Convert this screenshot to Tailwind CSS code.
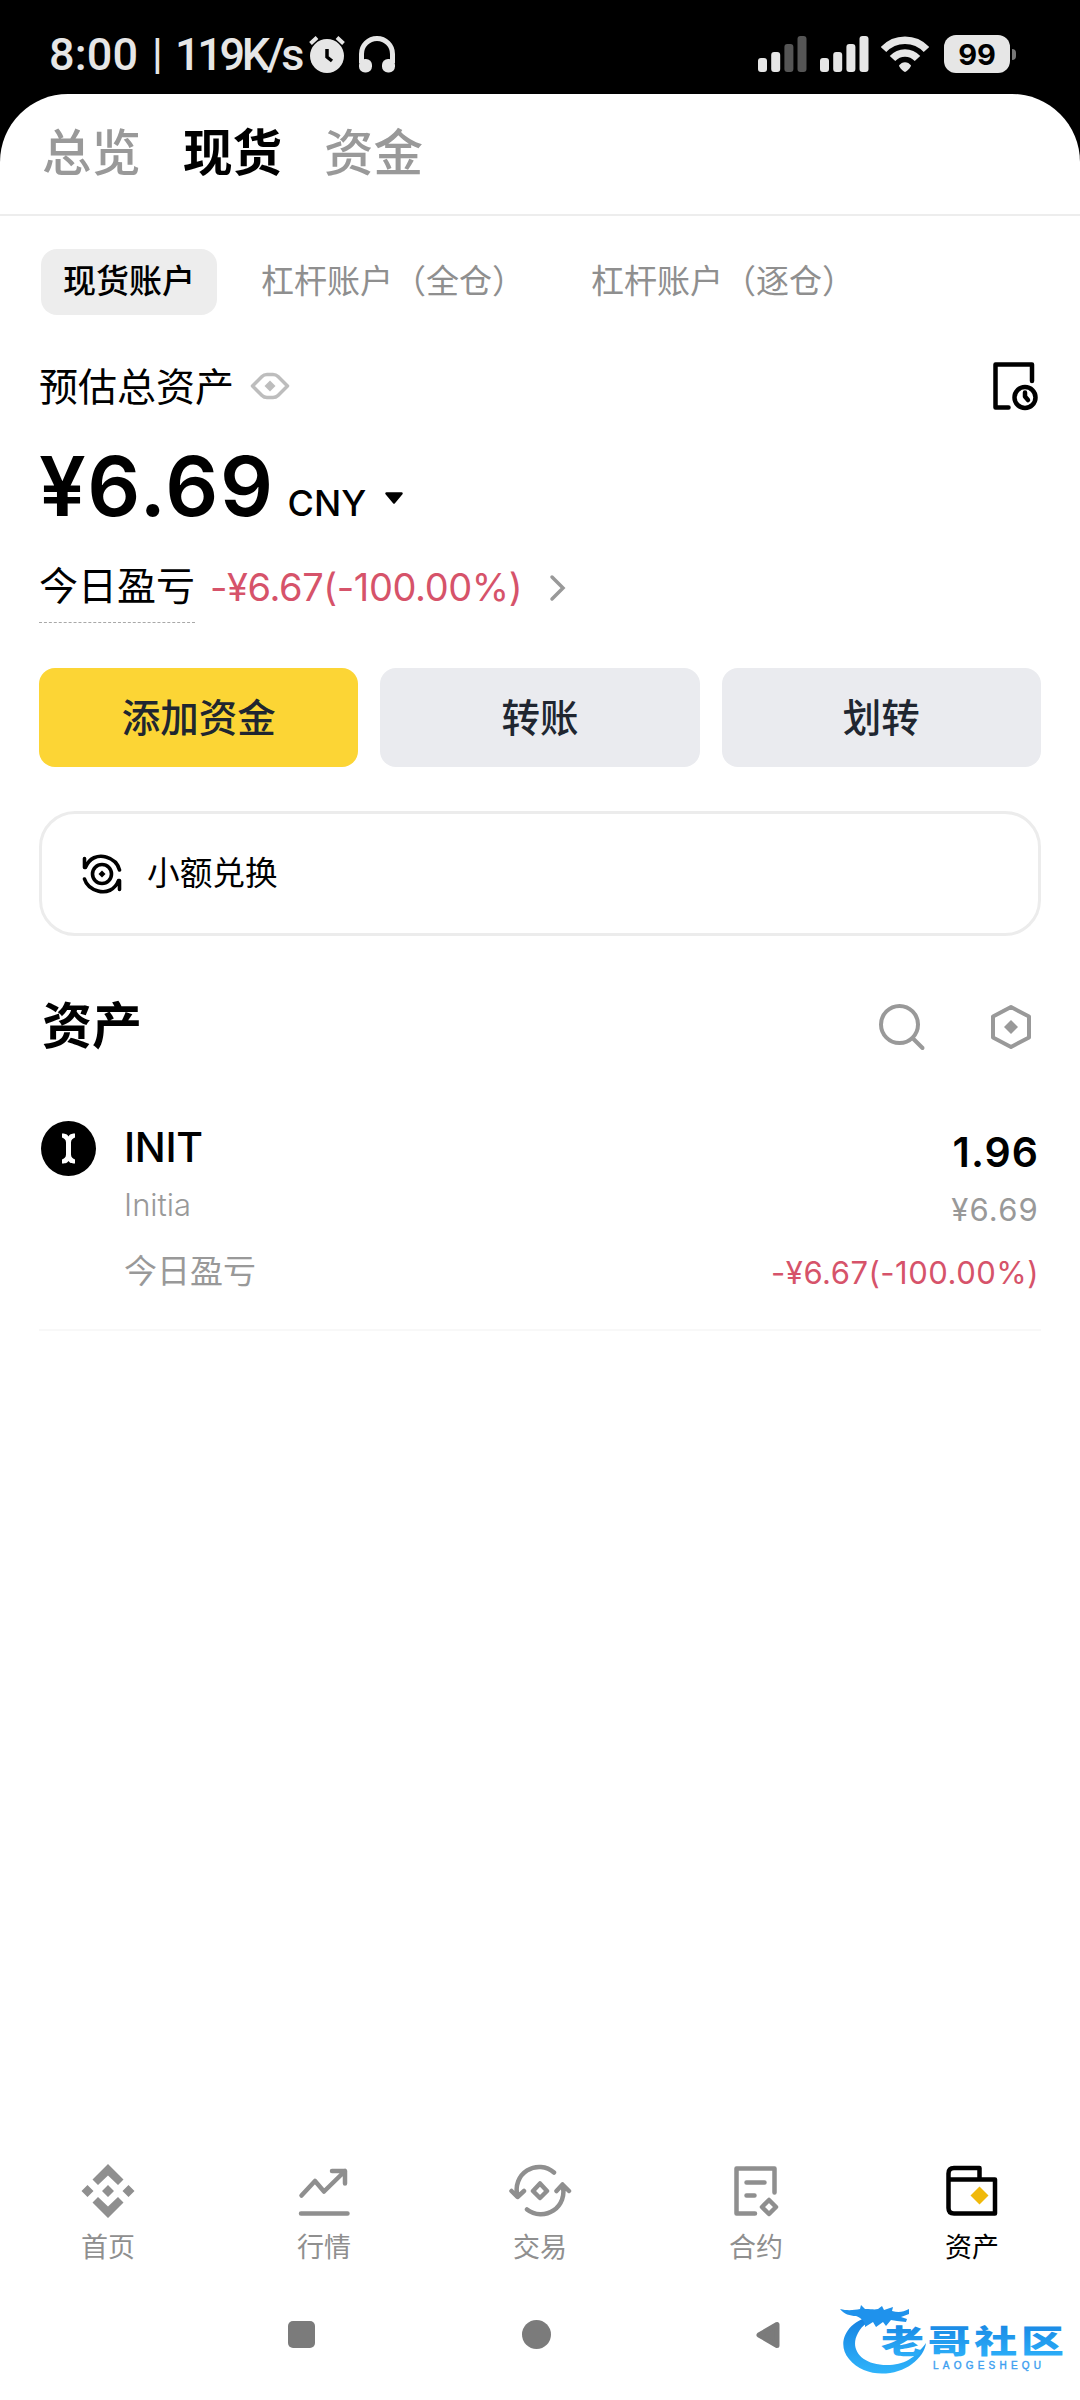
<!DOCTYPE html>
<html lang="zh-CN">
<head>
<meta charset="utf-8">
<title>资产</title>
<script src="https://cdn.jsdelivr.net/npm/@tailwindcss/browser@4"></script>
</head>
<body class="bg-black">
<div class="flex h-[2400px] w-[1080px] flex-col overflow-hidden bg-black font-['Inter','Noto_Sans_CJK_SC',sans-serif] leading-none whitespace-nowrap text-black">

  <!-- status bar -->
  <div class="flex h-[94px] shrink-0 items-center justify-between pt-[14px] pr-[64px] pl-[49px] text-[#e6e6e6]">
    <div class="flex items-center">
      <div class="flex w-[259px] items-center font-['Roboto',sans-serif] text-[45px] font-medium">
        <span class="w-[103px] tracking-[0.200px]">8:00</span>
        <span class="w-[23px] pb-[2px] text-[43px]">|</span>
        <span class="tracking-[-3.300px]">119K/s</span>
      </div>
      <svg class="h-[38px] w-[38px]" viewBox="0 0 38 38"><path d="M2.500 8.500 9 2.500M35.500 8.500 29 2.500" stroke="#e6e6e6" stroke-width="4"/><circle cx="19" cy="21" r="17" fill="#e6e6e6"/><path d="M19 14v8l5 4" fill="none" stroke="#000" stroke-width="3.500"/></svg>
      <svg class="ml-[12px] h-[38px] w-[38px]" viewBox="0 0 38 38"><path d="M3.500 28V19a15.500 15.500 0 0 1 31 0v9" fill="none" stroke="#e6e6e6" stroke-width="5"/><rect x="1" y="24" width="13" height="13.500" rx="6" fill="#e6e6e6"/><rect x="24" y="24" width="13" height="13.500" rx="6" fill="#e6e6e6"/></svg>
    </div>
    <div class="flex items-center">
      <svg class="h-[36px] w-[49px]" viewBox="0 0 49 36" fill="#e6e6e6"><rect y="22" width="9" height="14" rx="3"/><rect x="13.200" y="16" width="9" height="20" rx="3"/><rect x="26.400" y="8" width="9" height="28" rx="3" fill="#555"/><rect x="39.500" width="9" height="36" rx="3" fill="#555"/></svg>
      <svg class="ml-[13px] h-[36px] w-[49px]" viewBox="0 0 49 36" fill="#e6e6e6"><rect y="22" width="9" height="14" rx="3"/><rect x="13.200" y="16" width="9" height="20" rx="3"/><rect x="26.400" y="8" width="9" height="28" rx="3"/><rect x="39.500" width="9" height="36" rx="3"/></svg>
      <svg class="ml-[12px] h-[36px] w-[48px]" viewBox="0 0 48 36" fill="none" stroke="#e6e6e6" stroke-width="7.500"><path d="M2.500 13.500C14 1 34 1 45.500 13.500"/><path d="M11.500 22.500c7-7.500 18-7.500 25 0"/><path d="M18 29.500c3-4.500 9-4.500 12 0 0 2-5 6.500-6 6.500s-6-4.500-6-6.500z" fill="#e6e6e6" stroke="none"/></svg>
      <div class="ml-[15px] flex h-[38px] w-[66px] items-center justify-center rounded-[12px] bg-[#e6e6e6] text-[29px] font-bold text-black">99</div>
      <div class="ml-[2px] h-[11px] w-[4px] rounded-r-full bg-[#777]"></div>
    </div>
  </div>

  <div class="flex grow flex-col rounded-t-[68px] bg-white font-['Noto_Sans','Noto_Sans_CJK_SC',sans-serif]">
    <!-- top tabs -->
    <div class="flex h-[122px] shrink-0 items-center gap-[42px] border-b-2 border-[#ededed] pb-[2px] pl-[42px] text-[49.5px] font-medium text-[#999]">
      <span>总览</span><span class="font-bold text-black">现货</span><span>资金</span>
    </div>

    <!-- account chips -->
    <div class="mt-[33px] flex gap-[22px] pl-[41px] text-[33px] text-[#8f8f8f]">
      <div class="flex h-[66px] items-center rounded-[16px] bg-[#ededed] px-[22px] pb-[3px] font-medium text-black">现货账户</div>
      <div class="flex h-[66px] items-center px-[22px] pb-[3px]">杠杆账户（全仓）</div>
      <div class="flex h-[66px] items-center px-[22px] pb-[3px]">杠杆账户（逐仓）</div>
    </div>

    <div class="flex grow flex-col px-[39px]">
      <!-- balance -->
      <div class="mt-[47px] flex h-[48px] items-center justify-between">
        <div class="flex items-center gap-[16px]">
          <span class="pb-[2px] text-[39px]">预估总资产</span>
          <svg class="h-[28px] w-[40px]" viewBox="0 0 40 28"><path d="M2.500 14 12 4.500Q14 2.500 17 2.500h6q3 0 5 2L37.500 14 28 23.500q-2 2-5 2h-6q-3 0-5-2z" fill="none" stroke="#bdbdbd" stroke-width="3.500" stroke-linejoin="round"/><path d="m20 8.500 5.500 5.500-5.500 5.500-5.500-5.500z" fill="#bdbdbd"/></svg>
        </div>
        <svg class="mr-[1px] h-[50px] w-[48px]" viewBox="0 0 48 50" fill="none" stroke="#000" stroke-width="4.500" stroke-linecap="round" stroke-linejoin="round"><path d="M16.500 46.500H3.500V3.500H40V20"/><circle cx="33" cy="36.500" r="10.500"/><path d="M33 31.500v4l3 3.500"/></svg>
      </div>
      <div class="mt-[35px] flex h-[96px] items-baseline font-['Inter',sans-serif]">
        <span class="text-[83px] font-semibold tracking-[1.600px]">¥6.69</span>
        <span class="ml-[13px] text-[36px] font-medium">CNY</span>
        <svg class="ml-[18px] h-[24px] w-[20px]" viewBox="0 0 20 24"><path d="M2.500 1.500h15L10 10.500z" stroke="#000" stroke-width="2.500" stroke-linejoin="round"/></svg>
      </div>
      <div class="mt-[14px] flex h-[60px] items-center text-[39px]">
        <span class="flex h-[76px] items-center border-b border-dashed border-[#a8a8a8]">今日盈亏</span>
        <span class="ml-[15px] w-[313px] pt-[3px] font-['Inter',sans-serif] text-[38px] tracking-[-0.400px] text-[#d6536a]">-¥6.67(-100.00%)</span>
        <svg class="mt-[6px] ml-[26px] h-[28px] w-[18px]" viewBox="0 0 18 28"><path d="M3 3l11 11L3 25" fill="none" stroke="#999" stroke-width="3.500" stroke-linecap="round"/></svg>
      </div>

      <!-- actions -->
      <div class="mt-[53px] grid grid-cols-3 gap-[22px] text-[38.500px] font-medium text-[#202630]">
        <div class="flex h-[99px] items-center justify-center rounded-[16px] bg-[#fcd535]">添加资金</div>
        <div class="flex h-[99px] items-center justify-center rounded-[16px] bg-[#eaebef]">转账</div>
        <div class="flex h-[99px] items-center justify-center rounded-[16px] bg-[#eaebef]">划转</div>
      </div>

      <div class="mt-[44px] flex h-[125px] items-center rounded-[36px] border-[3px] border-[#ececec] pl-[40px] text-[32.700px]">
        <svg class="h-[40px] w-[40px]" viewBox="0 0 40 40" fill="none" stroke="#000" stroke-width="3.600" stroke-linecap="round" stroke-linejoin="round"><circle cx="20" cy="20" r="9.500"/><path d="m20 16.500 3.500 3.500-3.500 3.500-3.500-3.500z" fill="#000" stroke="none"/><path d="M2.500 4.500v9h1C7 4 16 .5 24 3c7 2 12 7 13.500 13"/><path d="M37.500 35.500v-9h-1C33 36 24 39.500 16 37 9 35 4 30 2.500 25"/></svg>
        <span class="ml-[25px]">小额兑换</span>
      </div>

      <!-- asset list -->
      <div class="mt-[61px] flex h-[60px] items-center justify-between pr-[8px] pl-[3px]">
        <h2 class="pb-[5px] text-[50px] font-bold">资产</h2>
        <div class="flex items-center gap-[63px]">
          <svg class="h-[48px] w-[48px]" viewBox="0 0 48 48" fill="none" stroke="#999" stroke-width="4" stroke-linecap="round"><circle cx="21.500" cy="21.500" r="18.500"/><path d="M35 35.500l9.500 9.500"/></svg>
          <svg class="h-[48px] w-[44px]" viewBox="0 0 44 48"><path d="M22 4 40 13.500v21L22 44 4 34.500v-21z" fill="none" stroke="#999" stroke-width="4" stroke-linejoin="round"/><path d="m22 17 7 7-7 7-7-7z" fill="#999"/></svg>
        </div>
      </div>

      <div class="mt-[64px] flex h-[210px] border-b-2 border-[#f8f8f8] pr-[2px] pl-[2px]">
        <svg class="h-[55px] w-[55px]" viewBox="0 0 55 55"><circle cx="27.500" cy="27.500" r="27.500"/><path d="M21 12.500c2 0 5 0 6.500 3 1.500-3 4.500-3 6.500-3v4c-2 1-4 2-4 5v12c0 3 2 4 4 5v4c-2 0-5 0-6.500-2.500-1.500 2.500-4.500 2.500-6.500 2.500v-4c2-1 4-2 4-5v-12c0-3-2-4-4-5z" fill="#fff"/></svg>
        <div class="ml-[28px] flex flex-col text-[#999]">
          <span class="mt-[6px] font-['Inter',sans-serif] text-[41px] font-medium tracking-[-0.400px] text-black">INIT</span>
          <span class="mt-[21px] font-['Inter',sans-serif] text-[31px] font-light">Initia</span>
          <span class="mt-[34px] text-[33px]">今日盈亏</span>
        </div>
        <div class="ml-auto flex flex-col items-end font-['Inter',sans-serif] text-[#999]">
          <span class="mt-[11px] text-[41px] font-semibold tracking-[1px] text-black">1.96</span>
          <span class="mt-[21px] text-[31px] tracking-[1.200px]">¥6.69</span>
          <span class="mt-[32px] text-[31px] tracking-[0.500px] text-[#d6536a]">-¥6.67(-100.00%)</span>
        </div>
      </div>
    </div>

    <!-- tab bar -->
    <div class="grid h-[146px] shrink-0 grid-cols-5 text-[27px] text-[#8f8f8f]">
      <div class="flex flex-col items-center gap-[13px]">
        <svg class="h-[58px] w-[58px]" viewBox="0 0 58 58" fill="#8f8f8f"><path d="M29 2 44.500 17.500 39 23 29 13.500 19 23l-5.500-5.500zM29 56 44.500 40.500 39 35 29 44.500 19 35l-5.500 5.500zM29 23l6 6-6 6-6-6zM8.500 23l6 6-6 6-6-6zM49.500 23l6 6-6 6-6-6z"/></svg>
        <span>首页</span>
      </div>
      <div class="flex flex-col items-center gap-[13px]">
        <svg class="h-[58px] w-[58px]" viewBox="0 0 58 58" fill="none" stroke="#8f8f8f" stroke-width="4.500" stroke-linecap="round" stroke-linejoin="round"><path d="M6.500 33.500 20 19l9 10.500L50 9M37 9h13v12.500M6 51.500h46.500"/></svg>
        <span>行情</span>
      </div>
      <div class="flex flex-col items-center gap-[13px]">
        <svg class="h-[58px] w-[64px]" viewBox="0 0 64 58" fill="none" stroke="#8f8f8f" stroke-width="4.500" stroke-linecap="round" stroke-linejoin="round"><path d="M46 10.500A22.500 22.500 0 0 0 9.500 33.500M3.500 29l6 6 6.500-6M19 47.500A22.500 22.500 0 0 0 54.500 23.500M48.500 29l6-6.500 6.500 6.500M32 21.500l7 7.500-7 7-7-7z"/></svg>
        <span>交易</span>
      </div>
      <div class="flex flex-col items-center gap-[13px]">
        <svg class="h-[58px] w-[58px]" viewBox="0 0 58 58" fill="none" stroke="#8f8f8f" stroke-width="4.500" stroke-linecap="round" stroke-linejoin="round"><path d="M28 51.500H9.500v-45h38v24M19.500 20.500h18M19.500 33.500h8M42 38l7 7-7 7-7-7z"/></svg>
        <span>合约</span>
      </div>
      <div class="flex flex-col items-center gap-[13px] text-black">
        <svg class="h-[58px] w-[58px]" viewBox="0 0 58 58" fill="none" stroke="#000" stroke-width="4.500" stroke-linecap="round" stroke-linejoin="round"><path d="M36.500 17V6H11q-5.500 0-5.500 5.500V46q0 5.500 5.500 5.500h41v-34H6"/><path d="m36.500 24.500 9 9-9 9-9-9z" fill="#f0b90b" stroke="none"/></svg>
        <span>资产</span>
      </div>
    </div>

    <!-- system navigation -->
    <div class="flex h-[92px] shrink-0 items-start pt-[12px]">
      <div class="mt-[1px] ml-[288px] h-[27px] w-[27px] rounded-[5px] bg-[#7b7b7b]"></div>
      <div class="ml-[207px] h-[29px] w-[29px] rounded-full bg-[#7b7b7b]"></div>
      <svg class="mt-[1px] ml-[204px] h-[28px] w-[25px]" viewBox="0 0 25 28"><path d="M4 14 22 3.500v21z" fill="#7b7b7b" stroke="#7b7b7b" stroke-width="5" stroke-linejoin="round"/></svg>
      <svg class="-mt-[19px] ml-[57px] h-[84px] w-[232px]" viewBox="0 0 232 84">
        <defs><linearGradient id="b" x1="0" y1="0" x2="0" y2="1"><stop offset="0" stop-color="#1580e0"/><stop offset="1" stop-color="#2fb4fb"/></linearGradient></defs>
        <path d="M37 15C11 18-2 42 12 58c15 19 46 18 63 5 8-6 13-13 14-21-12 16-22 22-39 22-26 0-38-16-29-32 4-8 12-13 22-15z" fill="url(#b)"/>
        <path d="M3 8c8 2 14 1 20 0l1-4 4 4c7 0 9 1 13 0l4-3 2 4 9-3-1 4c7 2 11 1 17-2v5l-8 3 6 2-1 3-9-1-6-1-5 6-3-4-7 5-3-5-8 5c1-5-4-9-9-11-6 0-12-2-16-7z" fill="#1f92ec"/>
        <g transform="translate(44 52) scale(1.34 1)"><text font-family="Noto Sans CJK SC, sans-serif" font-weight="900" font-size="32" letter-spacing="2.800" fill="url(#b)">老哥社区</text></g>
        <text x="96" y="68" font-family="Liberation Sans, sans-serif" font-size="10" textLength="108" fill="#3d9ff0" stroke="#3d9ff0" stroke-width=".4">LAOGESHEQU</text>
      </svg>
    </div>
  </div>
</div>
</body>
</html>
